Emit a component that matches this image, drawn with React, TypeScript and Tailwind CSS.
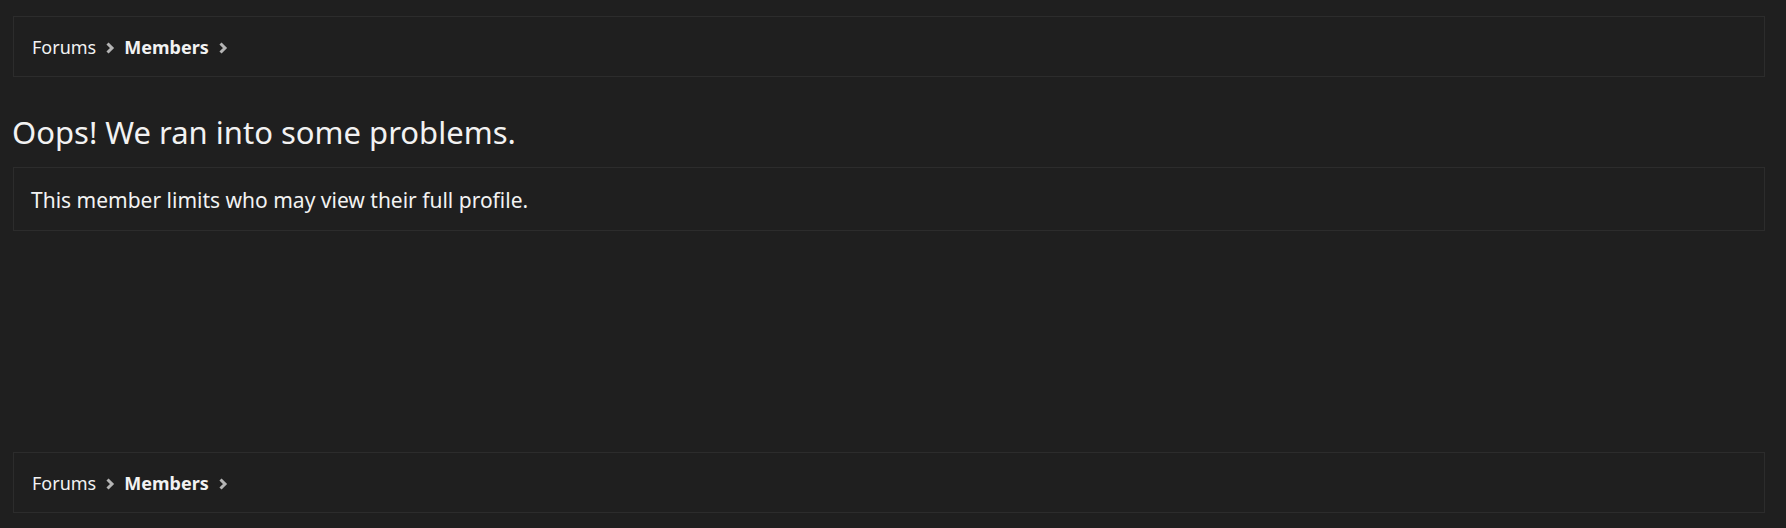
import React from 'react'

const Chevron = () => (
  <svg width="10" height="12" viewBox="0 0 10 12" className="mx-[9px] text-[#b4b4b4]">
    <path d="M2.5 1.5 L7 6 L2.5 10.5" fill="none" stroke="currentColor" strokeWidth="3" />
  </svg>
)

const Breadcrumb = () => (
  <div className="flex h-[61px] items-center border border-[#2c2c2c] px-[18px] pt-[2px] text-[18px] text-[#f2f2f2]">
    <span>Forums</span>
    <Chevron />
    <span className="font-bold">Members</span>
    <Chevron />
  </div>
)

export default function App() {
  return (
    <div
      className="h-[528px] bg-[#1f1f1f] pl-[13px] pr-[21px] pt-[16px]"
      style={{ fontFamily: '"Noto Sans", sans-serif' }}
    >
      <Breadcrumb />
      <h1 className="mt-[35px] -ml-[1px] text-[31px] font-normal leading-[40px] text-[#f2f2f2]">
        Oops! We ran into some problems.
      </h1>
      <div className="mt-[15px] flex h-[64px] items-center border border-[#2c2c2c] px-[17px] pt-[3px] text-[21px] text-[#f2f2f2]">
        This member limits who may view their full profile.
      </div>
      <div className="mt-[221px]">
        <Breadcrumb />
      </div>
    </div>
  )
}
